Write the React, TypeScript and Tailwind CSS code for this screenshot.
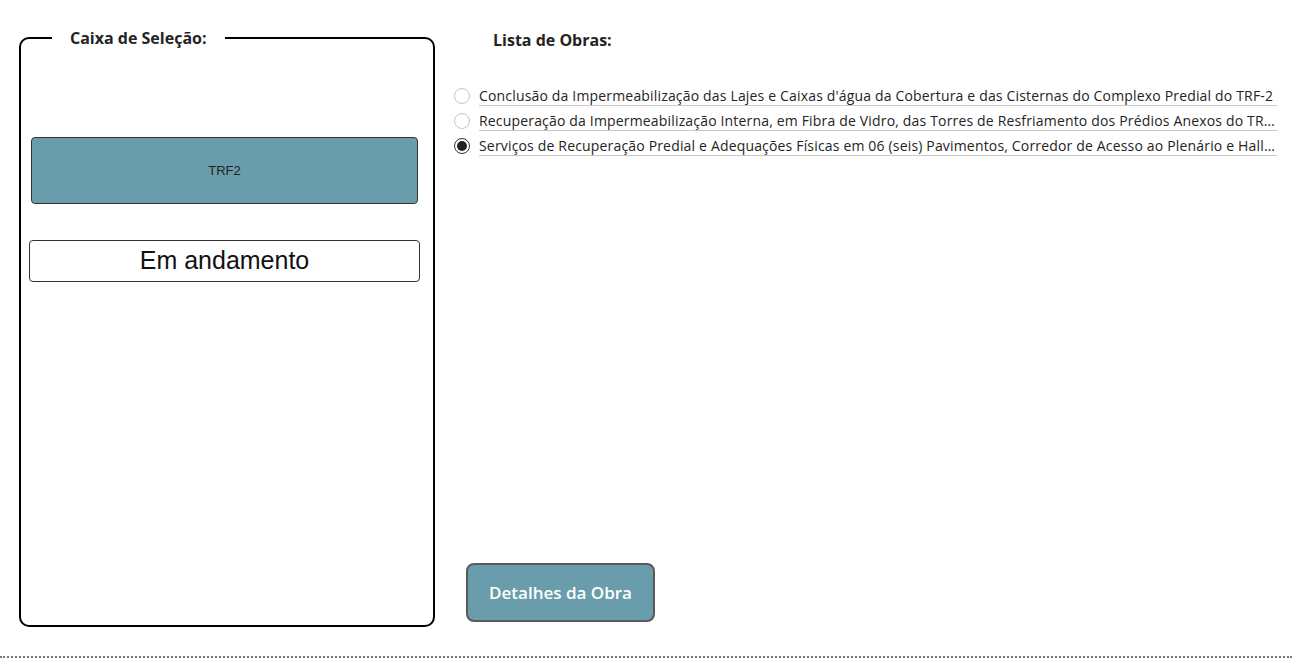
const obras = [
  { nome: "Conclusão da Impermeabilização das Lajes e Caixas d'água da Cobertura e das Cisternas do Complexo Predial do TRF-2", selecionada: false },
  { nome: "Recuperação da Impermeabilização Interna, em Fibra de Vidro, das Torres de Resfriamento dos Prédios Anexos do TRF-2", selecionada: false },
  { nome: "Serviços de Recuperação Predial e Adequações Físicas em 06 (seis) Pavimentos, Corredor de Acesso ao Plenário e Hall dos Elevadores", selecionada: true },
]

function Radio({ checked }: { checked: boolean }) {
  return checked ? (
    <span className="flex h-4 w-4 shrink-0 items-center justify-center rounded-full border border-[#333]">
      <span className="h-[10px] w-[10px] rounded-full bg-[#222]" />
    </span>
  ) : (
    <span className="h-4 w-4 shrink-0 rounded-full border border-[#c6c6c6]" />
  )
}

export default function App() {
  return (
    <div className="relative h-[670px] w-[1292px] bg-white" style={{ fontFamily: '"Open Sans", "Noto Sans", sans-serif' }}>
      <div className="flex pt-[28px]">
        {/* Caixa de Seleção */}
        <fieldset className="ml-[19px] h-[599px] w-[416px] min-w-0 rounded-[10px] border-2 border-black px-0">
          <legend className="ml-[31px] px-[18px] text-[16px] font-bold leading-[20px] text-[#252423]">
            Caixa de Seleção:
          </legend>
          <div className="mt-[89px] ml-[10px] flex h-[67px] w-[387px] items-center justify-center rounded-[4px] border border-[#333] bg-[#6a9dab] text-[13px] text-[#222]" style={{ fontFamily: '"Liberation Sans", Arial, sans-serif' }}>
            TRF2
          </div>
          <div className="mt-[36px] ml-[8px] flex h-[42px] w-[391px] items-center justify-center rounded-[4px] border border-[#333] bg-white text-[25px] text-[#111]" style={{ fontFamily: '"Liberation Sans", Arial, sans-serif' }}>
            Em andamento
          </div>
        </fieldset>

        {/* Lista de Obras */}
        <div className="ml-[19px] flex w-[824px] flex-col">
          <div className="ml-[39px] text-[16px] font-bold leading-[24px] text-[#252423]">Lista de Obras:</div>
          <div className="mt-[31px] flex flex-col">
            {obras.map((o) => (
              <div key={o.nome} className="flex h-[25px] items-center gap-[9px]">
                <Radio checked={o.selecionada} />
                <div className="w-[798px] truncate border-b border-[#c8c8c8] text-[14px] leading-[19px] tracking-[0.17px] text-[#252423]">
                  {o.nome}
                </div>
              </div>
            ))}
          </div>
          <button className="mt-[405px] ml-[12px] flex h-[59px] w-[189px] items-center justify-center rounded-[8px] border-2 border-[#5a5a5a] bg-[#6a9dab] text-[17px] font-semibold text-white">
            Detalhes da Obra
          </button>
        </div>
      </div>
      <div className="absolute left-0 right-0 top-[656px] border-t-2 border-dotted border-[#777]" />
    </div>
  )
}
